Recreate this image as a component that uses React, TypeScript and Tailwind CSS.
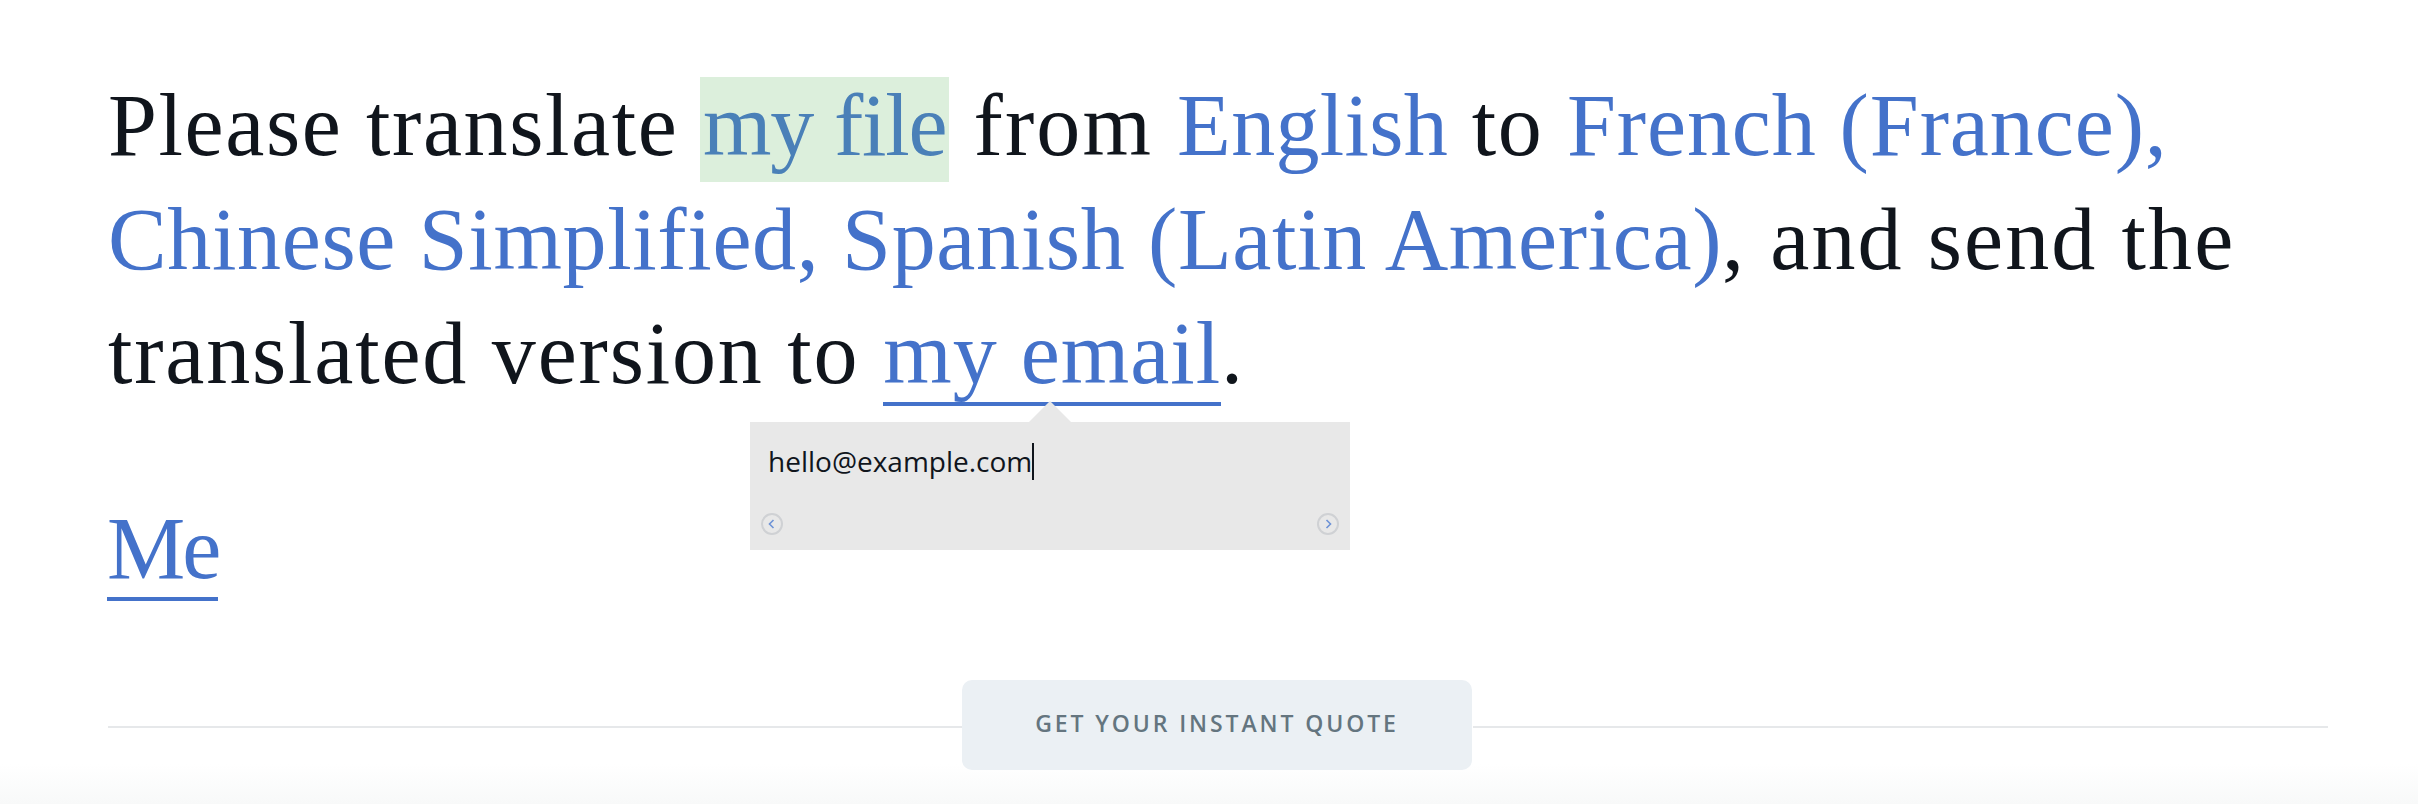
export default function App() {
  const chevron = (d: string) => (
    <span className="flex h-[22px] w-[22px] items-center justify-center rounded-full border-2 border-[#cfd1d4]">
      <svg width="10" height="12" viewBox="0 0 10 12" fill="none" stroke="#6d92d6" strokeWidth="1.6">
        <path d={d} />
      </svg>
    </span>
  );
  return (
    <div className="relative h-[804px] w-[2418px] overflow-hidden bg-gradient-to-b from-white from-[95%] to-[#f8f9f9] font-['Liberation_Serif',serif]">
      <div className="pl-[108px] pr-[90px] pt-[69px]">
        <p className="text-[88px] leading-[114px] tracking-[1px] text-[#10151c]">
          <span className="tracking-[1.6px]">Please translate </span>
          <span className="ml-[-2px] bg-[#dcefdc] px-[3px] pb-[8px] tracking-[-1.2px] text-[#4a80b8]">my file</span>
          <span className="tracking-[2.1px]"> from </span>
          <span className="tracking-[0.3px] text-[#4472ca]">English</span>
          <span className="tracking-[1.6px]"> to </span>
          <span className="tracking-[0.9px] text-[#4472ca]">French (France),</span>
          <br />
          <span className="tracking-[0.65px] text-[#4472ca]">Chinese Simplified, Spanish (Latin America)</span>
          <span className="tracking-[2.1px]">, and send the</span>
          <br />
          <span className="tracking-[1.8px]">translated version to </span>
          <span className="border-b-4 border-[#4472ca] text-[#4472ca]">my email</span>.
        </p>
        <p className="ml-[-1px] mt-[81px] text-[88px] leading-[114px] tracking-[-3px] text-[#4472ca]">
          <span className="border-b-4 border-[#4472ca]">Me</span>
        </p>
      </div>

      <div className="absolute left-[750px] top-[422px] h-[128px] w-[600px] bg-[#e8e8e8] font-['Open_Sans',sans-serif]">
        <div className="absolute left-[279px] top-[-21px] h-0 w-0 border-x-[21px] border-b-[21px] border-x-transparent border-b-[#e8e8e8]" />
        <div className="flex items-center pl-[18px] pt-[21px] text-[28px] leading-[37px] text-[#10151c]">
          hello@example.com
          <span className="h-[37px] w-[2px] bg-[#10151c]" />
        </div>
        <div className="mt-[33px] flex justify-between px-[11px]">
          {chevron("M6.5 2 L2.5 6 L6.5 10")}
          {chevron("M3.5 2 L7.5 6 L3.5 10")}
        </div>
      </div>

      <div className="absolute left-[108px] top-[680px] flex w-[2220px] items-start font-['Open_Sans',sans-serif]">
        <div className="mt-[46px] h-[2px] flex-1 bg-[#e6e8ea]" />
        <div className="ml-[-1px] mr-[1px] flex h-[90px] w-[510px] items-center justify-center rounded-[10px] bg-[#ebf0f4] pb-[3px] text-[23px] font-semibold tracking-[2.9px] text-[#64757f]">
          GET YOUR INSTANT QUOTE
        </div>
        <div className="mt-[46px] h-[2px] flex-1 bg-[#e6e8ea]" />
      </div>
    </div>
  );
}
